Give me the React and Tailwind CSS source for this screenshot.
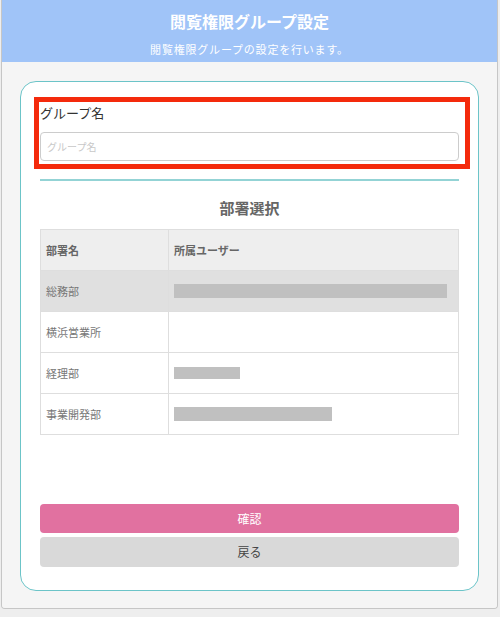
const rows = [
  { name: "総務部", bar: 273, barH: 14, selected: true },
  { name: "横浜営業所", bar: 0 },
  { name: "経理部", bar: 66, barH: 12 },
  { name: "事業開発部", bar: 158, barH: 14 },
];

function DeptTable() {
  return (
    <table className="w-full border-collapse border border-[#dedede] text-[11px]">
      <thead>
        <tr className="h-[41px] bg-[#eeeeee] text-left text-[#666]">
          <th className="w-[128px] border border-[#dedede] px-[5px] font-bold">部署名</th>
          <th className="border border-[#dedede] px-[5px] font-bold">所属ユーザー</th>
        </tr>
      </thead>
      <tbody>
        {rows.map((r) => (
          <tr key={r.name} className={r.selected ? "h-[41px] bg-[#e0e0e0]" : "h-[41px] bg-white"}>
            <td className="border border-[#dedede] px-[5px] text-[#777]">{r.name}</td>
            <td className="border border-[#dedede] px-[5px]">
              {r.bar > 0 && (
                <div className="bg-[#c0c0c0]" style={{ width: r.bar, height: r.barH }} />
              )}
            </td>
          </tr>
        ))}
      </tbody>
    </table>
  );
}

export default function App() {
  return (
    <div
      className="min-h-[617px] bg-[#eeeeee]"
      style={{ fontFamily: '"Noto Sans CJK JP", "Noto Sans", sans-serif' }}
    >
      <div className="ml-[1px] w-[497px] overflow-hidden rounded-b-[4px] border-x border-b border-[#c6c6c6]">
        <header className="flex h-[62px] flex-col items-center bg-[#a0c4f8] text-white">
          <h1 className="mt-[9px] text-[16px] font-bold leading-[24px]">閲覧権限グループ設定</h1>
          <p className="mt-[8px] text-[11px] leading-[16px] tracking-[0.8px]">閲覧権限グループの設定を行います。</p>
        </header>

        <main className="bg-[#f5f5f5] px-[18px] pb-[17px] pt-[19px]">
          <div className="h-[510px] rounded-[16px] border border-[#6cc4c8] bg-white px-[19px] pt-[22px]">
            <div className="relative">
              <div className="pointer-events-none absolute -bottom-[8px] -left-[6px] -right-[11px] -top-[7px] border-[5px] border-[#f42a0c]" />
              <label className="block text-[13px] leading-[18px] text-[#333]">グループ名</label>
              <input
                className="mt-[10px] block h-[29px] w-full rounded-[4px] border border-[#cccccc] px-[6px] text-[10px] placeholder:text-[#c8c8c8]"
                placeholder="グループ名"
              />
            </div>

            <div className="mt-[18px] h-[2px] bg-[#93d3d5]" />

            <h2 className="mt-[16px] text-center text-[15px] font-bold leading-[22px] text-[#666]">部署選択</h2>

            <div className="mt-[10px]">
              <DeptTable />
            </div>

            <div className="mt-[69px] flex flex-col gap-[4px] text-[12px]">
              <button className="h-[29px] rounded-[4px] bg-[#e171a0] text-white">確認</button>
              <button className="h-[30px] rounded-[4px] bg-[#d9d9d9] text-[#444]">戻る</button>
            </div>
          </div>
        </main>
      </div>
    </div>
  );
}
